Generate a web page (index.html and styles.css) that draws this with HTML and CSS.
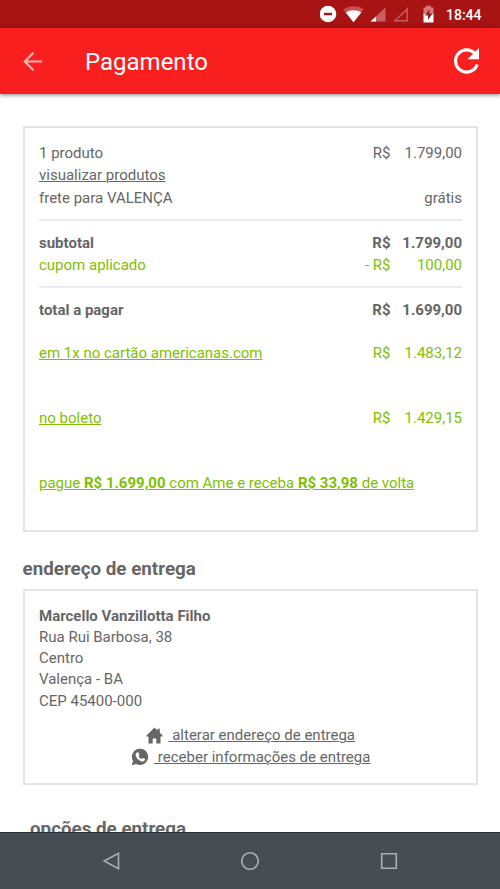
FILE: index.html
```html
<!DOCTYPE html>
<html lang="pt-BR">
<head>
<meta charset="utf-8">
<title>Pagamento</title>
<link rel="stylesheet" href="styles.css">
</head>
<body>
<div class="status">
  <svg class="status-icons" width="120" height="28" viewBox="0 0 120 28">
    <circle cx="8" cy="14" r="8.3" fill="#fff"/><path d="M4 14h8" stroke="#a81414" stroke-width="2.4"/>
    <path d="M23.300 9.500C29 5 38.500 5 43.700 9.500L33.500 22.300Z" fill="#c75050"/>
    <path d="M25.700 12.500C30 9.500 37 9.500 41.300 12.500L33.500 22.300Z" fill="#fff"/>
    <path d="M50.500 21.500 65.500 7.500v14z" fill="#c96060"/><path d="M50.500 21.500 56 16.400v5.100z" fill="#fff"/>
    <path d="M75 20.700 87.200 9v11.700z" fill="none" stroke="#c75a5a" stroke-width="1.500"/>
    <path d="M103.500 7.500h2.500V5.800h5v1.700h2.500V15h-10z" fill="#d77"/>
    <path d="M103.500 14h10v8.500h-10z" fill="#fff"/><path d="M109.500 9 105 15.500h3v4.500l4.500-6.500h-3z" fill="#96201e"/>
  </svg>
  <span class="clock">18:44</span>
</div>
<header class="appbar">
  <svg class="back" width="20" height="20" viewBox="0 0 20 20"><path d="M19 10.500H2M10.500 1.800 1.800 10.500l8.700 8.700" fill="none" stroke="#ffb5b0" stroke-width="2.200"/></svg>
  <h1>Pagamento</h1>
  <svg class="reload" width="28" height="28" viewBox="0 0 28 28"><path d="M23.300 7A11.100 11.100 0 1 0 25.200 17.500" fill="none" stroke="#fff" stroke-width="3.200"/><path d="M27 1v11.300H15.500z" fill="#fff"/></svg>
</header>
<main>
  <section class="card summary">
    <div class="group">
      <div class="row"><span>1 produto</span><span class="price"><span>R$</span><span>1.799,00</span></span></div>
      <div class="row"><a class="products">visualizar produtos</a></div>
      <div class="row"><span class="freight">frete para VALENÇA</span><span>grátis</span></div>
    </div>
    <div class="group">
      <div class="row bold"><span>subtotal</span><span class="price"><span>R$</span><span>1.799,00</span></span></div>
      <div class="row green"><span>cupom aplicado</span><span class="price"><span>- R$</span><span>100,00</span></span></div>
    </div>
    <div class="group">
      <div class="row bold"><span>total a pagar</span><span class="price"><span>R$</span><span>1.699,00</span></span></div>
      <div class="row green option first"><a>em 1x no cartão americanas.com</a><span class="price"><span>R$</span><span>1.483,12</span></span></div>
      <div class="row green option"><a>no boleto</a><span class="price"><span>R$</span><span>1.429,15</span></span></div>
      <div class="row green option"><a class="ame">pague <b>R$ 1.699,00</b> com Ame e receba <b>R$ 33,98</b> de volta</a></div>
    </div>
  </section>
  <h2>endereço de entrega</h2>
  <section class="card address">
    <p class="bold">Marcello Vanzillotta Filho</p>
    <p>Rua Rui Barbosa, 38</p>
    <p>Centro</p>
    <p>Valença - BA</p>
    <p>CEP 45400-000</p>
    <div class="links">
      <div class="link"><svg width="17" height="17" viewBox="0 0 17 17"><path d="M8.500.5 11.500 3.500V1.800h2.300v4L16.500 8.500V9.500H14.500v7H10.300v-5H6.700v5H2.500v-7H.5V8.500z" fill="#666"/></svg><a>&nbsp;alterar endereço de entrega</a></div>
      <div class="link"><svg width="18" height="18" viewBox="0 0 18 18"><path d="M9.200.7a8.100 8.100 0 1 1-4 15.200L.7 17.200 2 12.900A8.100 8.100 0 0 1 9.200.7z" fill="#666"/><path d="M6.100 4.500 7.300 4.300 8.500 7 7.600 8.200C8.300 9.600 9.300 10.500 10.600 11.100L11.700 9.900 14.100 11.100C14 12.700 12.700 13.700 11.200 13.500 7.700 12.700 5 9.700 4.600 6.700 4.700 5.700 5.300 4.900 6.100 4.500z" fill="#fff"/></svg><a>&nbsp;receber informações de entrega</a></div>
    </div>
  </section>
  <h2 class="next">opções de entrega</h2>
</main>
<nav class="navbar">
  <svg width="20" height="20" viewBox="0 0 20 20"><path d="M17.500 2.300v15.400L3.200 10z"/></svg>
  <svg width="20" height="20" viewBox="0 0 20 20"><circle cx="10" cy="10" r="8.300"/></svg>
  <svg width="20" height="20" viewBox="0 0 20 20"><path d="M2.700 2.700h14.600v14.600H2.700z"/></svg>
</nav>
</body>
</html>
```
FILE: styles.css
```css
* { box-sizing: border-box; }
body {
  margin: 0;
  height: 889px;
  display: flex;
  flex-direction: column;
  overflow: hidden;
  background: #fff;
  color: #666;
  font-family: Roboto, sans-serif;
  font-size: 15px;
}
h1, h2, p { margin: 0; }
a { text-decoration: underline; text-underline-offset: 1px; text-decoration-thickness: 1px; }
b, .bold { font-weight: 700; }
.status {
  flex: none;
  height: 28px;
  padding-right: 18px;
  display: flex;
  justify-content: flex-end;
  align-items: center;
  background: #a81414;
  color: #fff;
}
.status-icons { margin-right: 6px; }
.clock { width: 36px; padding-top: 1px; font-size: 14px; font-weight: 500; white-space: nowrap; }
.appbar {
  position: relative;
  flex: none;
  height: 66px;
  padding: 0 20px 0 23px;
  display: flex;
  align-items: center;
  background: #f91f1f;
  color: #fff;
  box-shadow: 0 1px 4px rgba(0, 0, 0, .5);
}
.appbar h1 { flex: 1; margin-left: 42px; padding-top: 2px; font-size: 24px; font-weight: 400; line-height: 30px; }
main { flex: 1; min-height: 0; overflow: hidden; padding: 32px 22px 0 22.500px; }
.card { border: 2px solid #e4e4e4; padding: 0 14px; margin-left: .5px; }
.summary { height: 405.500px; padding-top: 14px; }
.group + .group { border-top: 2px solid #ebebeb; margin-top: 10px; padding-top: 10.800px; }
.row { display: flex; justify-content: space-between; height: 22.300px; line-height: 22.300px; white-space: nowrap; }
.price { display: flex; }
.price span:last-child { width: 71.500px; text-align: right; }
.green { color: #80c000; }
.option { margin-top: 42.500px; }
.option.first { margin-top: 21px; }
h2 { font-size: 18.800px; font-weight: 700; line-height: 24px; margin-top: 25px; }
.address { height: 196px; margin-top: 8px; padding-top: 15px; }
.address p { line-height: 21.300px; }
.links { margin-top: 12.500px; }
.link { height: 22px; line-height: 22px; display: flex; justify-content: center; align-items: center; gap: 5.500px; }
.next { margin: 32.500px 0 0 7.500px; }
.navbar {
  flex: none;
  height: 57px;
  border-top: 1px solid #252e30;
  background: #464e54;
  display: flex;
  justify-content: center;
  align-items: center;
  gap: 119px;
}
.navbar svg { fill: none; stroke: #a9afb5; stroke-width: 1.600; }
```
